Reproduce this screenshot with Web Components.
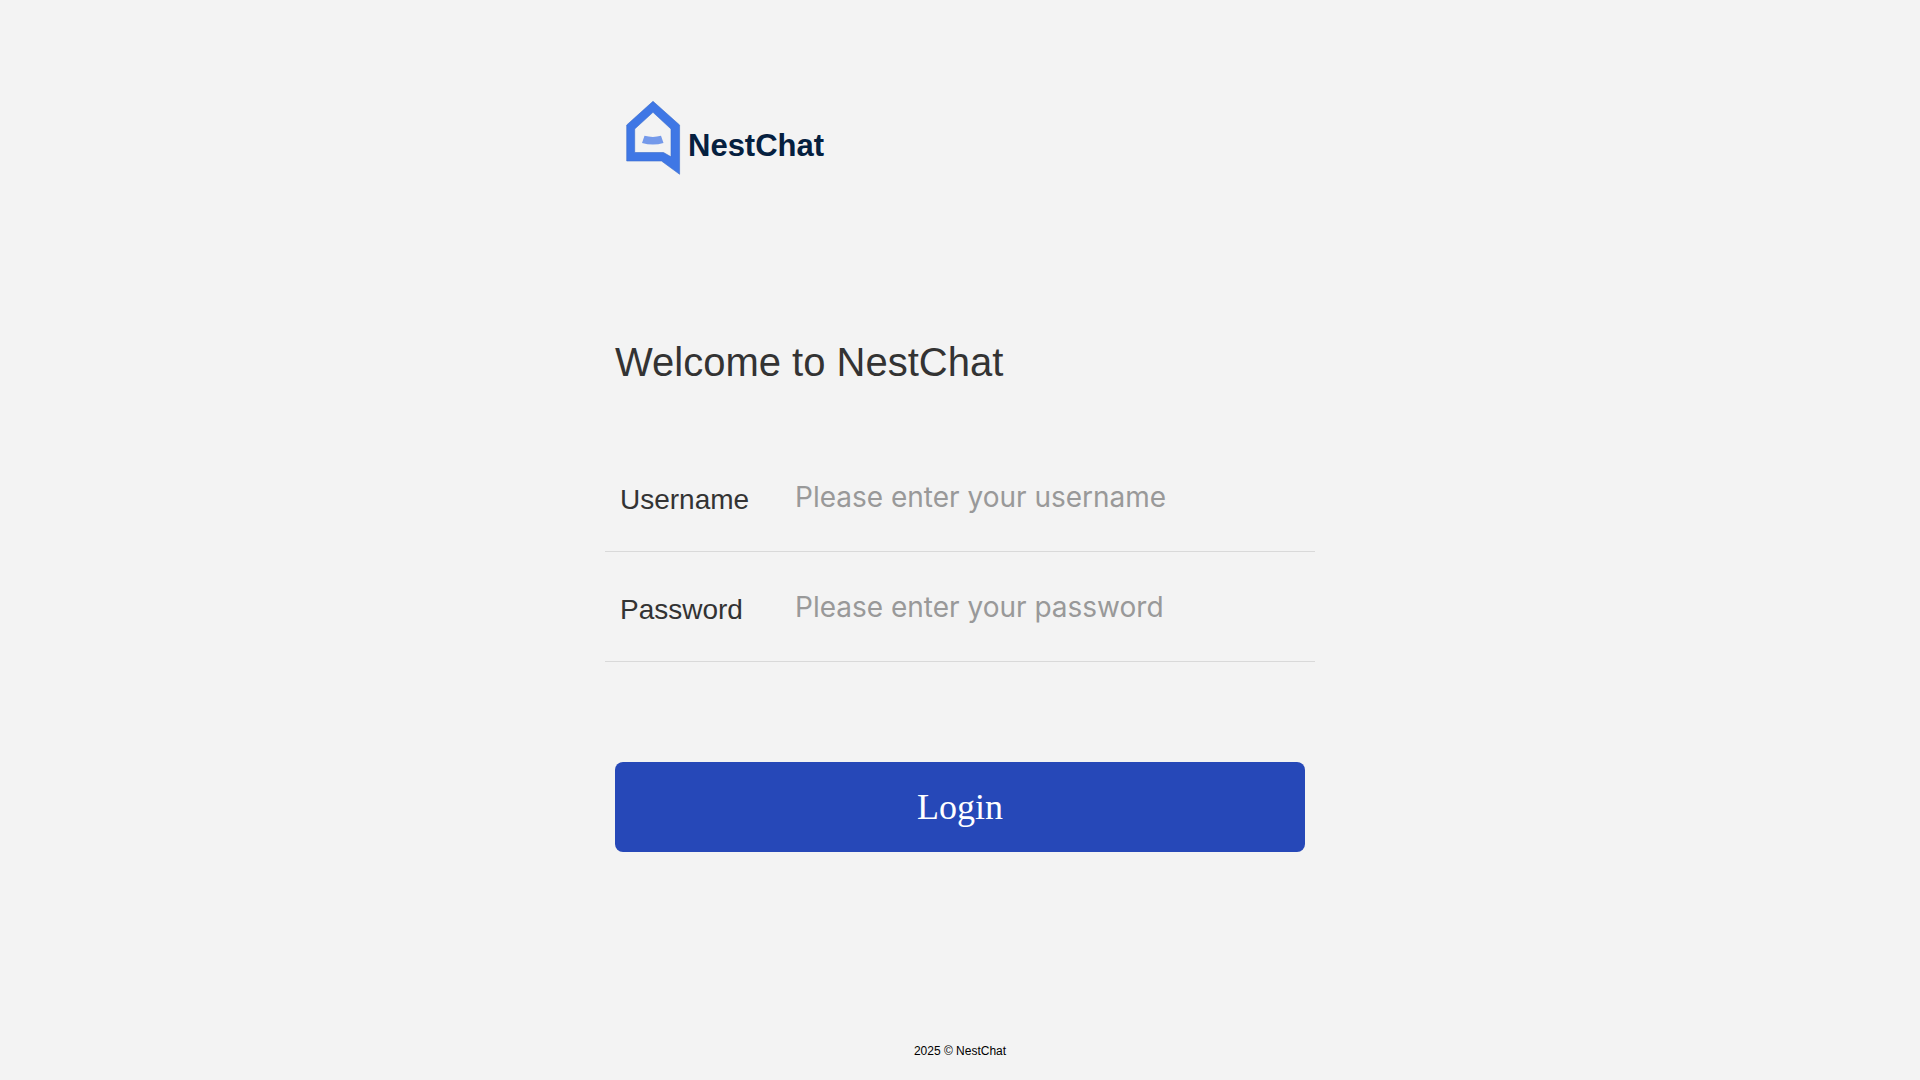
<!DOCTYPE html>
<html lang="en">
<head>
<meta charset="utf-8">
<meta name="viewport" content="width=device-width, initial-scale=1">
<title>NestChat</title>
<style>
  body { margin: 0; background: #f3f3f3; font-family: "Liberation Sans", Arial, sans-serif; color: #333; }
</style>
</head>
<body>
<login-page></login-page>
<script>
class NestLogo extends HTMLElement {
  constructor() {
    super();
    this.attachShadow({ mode: 'open' }).innerHTML = `
      <style>
        :host { display: flex; align-items: center; gap: 6px; }
        svg { display: block; width: 56px; height: 76px; flex: none; }
        span { font-size: 31px; line-height: 40px; font-weight: 700; color: #05203f; padding-top: 15px; }
      </style>
      <svg viewBox="0 0 56 76" aria-hidden="true">
        <path fill="#3f77e5" stroke="#3a6dcc" stroke-width=".6" fill-rule="evenodd" d="M27 1.300 53.600 25v49.300L35.500 61H.7V25ZM27 12.300 8.700 29v23.500H37.500l7.500 4.300V29Z"/>
        <path fill="#7499ea" d="M18.500 35.800q8.500 2.200 16.500 0l2.500 7.200q-10.500 3.200-21.500 0Z"/>
      </svg>
      <span>NestChat</span>`;
  }
}
customElements.define('nest-logo', NestLogo);

class FormField extends HTMLElement {
  constructor() {
    super();
    this.attachShadow({ mode: 'open' }).innerHTML = `
      <style>
        :host { display: block; border-bottom: 1px solid #d9d9d9; }
        div { display: flex; align-items: center; padding: 35px 15px 29px; }
        label { flex: none; width: 175px; font-size: 28px; line-height: 45px; color: #333; }
        input { flex: 1; min-width: 0; height: 40px; margin: 0 0 5px; padding: 0; border: 0; outline: 0; background: none;
                font: 28px/40px Inter, sans-serif; color: #333; }
        input::placeholder { color: #999; opacity: 1; }
      </style>
      <div><label for="control"></label><input id="control"></div>`;
  }
  connectedCallback() {
    const input = this.shadowRoot.querySelector('input');
    this.shadowRoot.querySelector('label').textContent = this.getAttribute('label');
    input.type = this.getAttribute('type') || 'text';
    input.placeholder = this.getAttribute('placeholder') || '';
  }
}
customElements.define('form-field', FormField);

class PrimaryButton extends HTMLElement {
  constructor() {
    super();
    this.attachShadow({ mode: 'open' }).innerHTML = `
      <style>
        :host { display: block; }
        button { display: block; width: 100%; height: 90px; border: 0; border-radius: 8px; padding: 0;
                 background: #2648b8; color: #fff; font: 36px/90px "Liberation Serif", serif; cursor: pointer; }
      </style>
      <button type="button"><slot></slot></button>`;
  }
}
customElements.define('primary-button', PrimaryButton);

class PageFooter extends HTMLElement {
  constructor() {
    super();
    this.attachShadow({ mode: 'open' }).innerHTML = `
      <style>
        :host { display: block; text-align: center; font-size: 12px; line-height: 18px; color: #000; padding-bottom: 20px; }
      </style>
      <slot></slot>`;
  }
}
customElements.define('page-footer', PageFooter);

class LoginPage extends HTMLElement {
  constructor() {
    super();
    this.attachShadow({ mode: 'open' }).innerHTML = `
      <style>
        :host { display: flex; flex-direction: column; min-height: 100vh; }
        main { flex: 1; box-sizing: border-box; width: 100%; max-width: 710px; margin: 0 auto; padding: 100px 0 40px; }
        nest-logo { margin: 0 21px; }
        h1 { margin: 162px 10px 0; font-size: 40px; line-height: 48px; font-weight: 400; color: #333; }
        form { margin: 56px 0 0; }
        primary-button { margin: 100px 10px 0; }
      </style>
      <main>
        <nest-logo></nest-logo>
        <h1>Welcome to NestChat</h1>
        <form>
          <form-field label="Username" placeholder="Please enter your username"></form-field>
          <form-field label="Password" type="password" placeholder="Please enter your password"></form-field>
          <primary-button>Login</primary-button>
        </form>
      </main>
      <page-footer>2025 © NestChat</page-footer>`;
  }
}
customElements.define('login-page', LoginPage);
</script>
</body>
</html>
